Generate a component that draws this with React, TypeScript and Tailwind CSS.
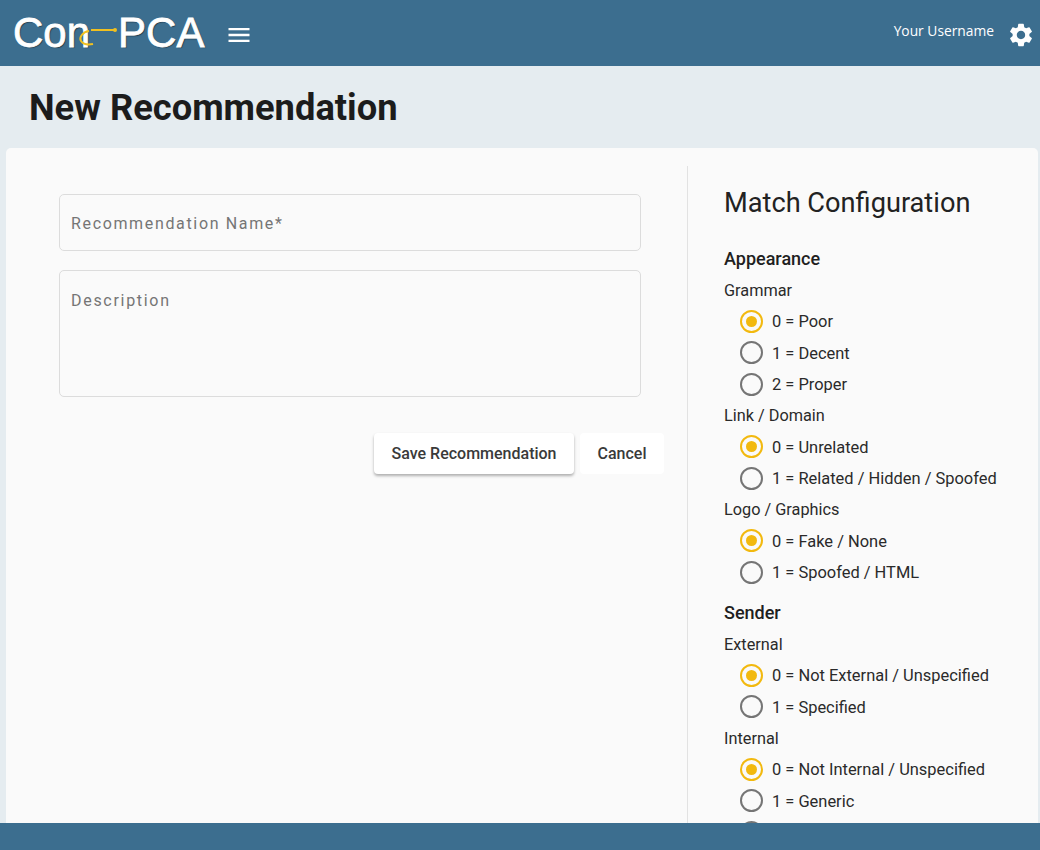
import { MdMenu, MdSettings } from "react-icons/md";

function Radio({ label, on = false }: { label: string; on?: boolean }) {
  return (
    <div className="flex h-[31.5px] items-center pl-[16px]">
      <span
        className={`flex h-[23px] w-[23px] shrink-0 items-center justify-center rounded-full border-2 ${
          on ? "border-[#f2b90f]" : "border-[#757575]"
        }`}
      >
        {on ? <span className="h-[11px] w-[11px] rounded-full bg-[#f2b90f]" /> : null}
      </span>
      {label ? <span className="ml-[9px] pt-[2px] text-[16.45px] leading-none text-[#2a2a2a]">{label}</span> : null}
    </div>
  );
}

function GroupLabel({ children }: { children: string }) {
  return <div className="flex h-[31px] items-center pt-[2px] text-[16.3px] leading-none text-[#2a2a2a]">{children}</div>;
}

function Heading({ children }: { children: string }) {
  return <div className="flex h-[26px] items-center text-[18px] font-medium leading-none text-[#1f1f1f]">{children}</div>;
}

export default function App() {
  return (
    <div className="flex h-[850px] w-[1040px] flex-col overflow-hidden bg-[#e5ecf0] font-['Roboto',sans-serif]">
      <header className="flex h-[66px] shrink-0 items-center bg-[#3c6e8f]">
        <div className="relative ml-[13px] flex h-[66px] w-[195px] items-center font-['Liberation_Sans',sans-serif] text-[42px] leading-none text-white [-webkit-text-stroke:0.8px_white] [text-shadow:1px_1px_1px_rgba(0,0,0,0.5)]">
          <span>Con</span>
          <span className="ml-[28px]">PCA</span>
          <svg className="absolute left-[61px] top-[26px]" width="60" height="24" viewBox="0 0 60 24" fill="none">
            <path d="M17 4H41" stroke="#f0c020" strokeWidth="2" />
            <circle cx="41" cy="4" r="2" fill="#f0c020" />
            <path d="M15 5C8 6 5 12 7 15C9 18 14 19 19 18" stroke="#f0c020" strokeWidth="2" />
          </svg>
        </div>
        <MdMenu className="ml-[17px] mt-[3px] text-white" size={28} />
        <div className="ml-auto mt-[-4px] font-['Open_Sans',sans-serif] text-[13.8px] text-white">Your Username</div>
        <MdSettings className="ml-[13px] mr-[5px] mt-[3px] text-white" size={28} />
      </header>

      <div className="flex h-[82px] shrink-0 items-center pl-[29px] pt-[2px]">
        <h1 className="text-[36.3px] font-bold leading-none text-[#1c1c1c]">New Recommendation</h1>
      </div>

      <main className="ml-[6px] mr-[2px] flex min-h-0 flex-1 overflow-hidden rounded-t-[5px] bg-[#fafafa] pt-[18px]">
        <section className="w-[682px] shrink-0 border-r border-[#e2e2e2]">
          <div className="ml-[53px] mt-[28px] flex h-[57px] w-[582px] items-center rounded-[5px] border border-[#dcdcdc] px-[11px] pt-[3px] text-[16px] tracking-[1.65px] text-[#757575]">
            Recommendation Name*
          </div>
          <div className="ml-[53px] mt-[19px] h-[127px] w-[582px] rounded-[5px] border border-[#dcdcdc] px-[11px] pt-[20px] text-[16px] leading-[20px] tracking-[1.7px] text-[#757575]">
            Description
          </div>
          <div className="ml-[368px] mt-[36px] flex gap-[6px]">
            <button className="h-[41px] w-[200px] rounded-[4px] bg-white text-[16px] font-medium text-[#3a3a3a] shadow-[0_2px_3px_rgba(0,0,0,0.3)]">
              Save Recommendation
            </button>
            <button className="h-[41px] w-[84px] rounded-[4px] bg-white text-[16px] font-medium text-[#3a3a3a]">
              Cancel
            </button>
          </div>
        </section>

        <aside className="flex-1 pl-[36px]">
          <h2 className="mb-[25px] mt-[19px] text-[27.2px] font-normal leading-[36px] text-[#222]">Match Configuration</h2>
          <Heading>Appearance</Heading>
          <div className="h-[2.6px]" />
          <GroupLabel>Grammar</GroupLabel>
          <Radio label="0 = Poor" on />
          <Radio label="1 = Decent" />
          <Radio label="2 = Proper" />
          <GroupLabel>Link / Domain</GroupLabel>
          <Radio label="0 = Unrelated" on />
          <Radio label="1 = Related / Hidden / Spoofed" />
          <GroupLabel>Logo / Graphics</GroupLabel>
          <Radio label="0 = Fake / None" on />
          <Radio label="1 = Spoofed / HTML" />
          <div className="h-[12px]" />
          <Heading>Sender</Heading>
          <div className="h-[2.6px]" />
          <GroupLabel>External</GroupLabel>
          <Radio label="0 = Not External / Unspecified" on />
          <Radio label="1 = Specified" />
          <GroupLabel>Internal</GroupLabel>
          <Radio label="0 = Not Internal / Unspecified" on />
          <Radio label="1 = Generic" />
          <Radio label="" />
        </aside>
      </main>

      <footer className="h-[27px] shrink-0 bg-[#3c6e8f]" />
    </div>
  );
}
